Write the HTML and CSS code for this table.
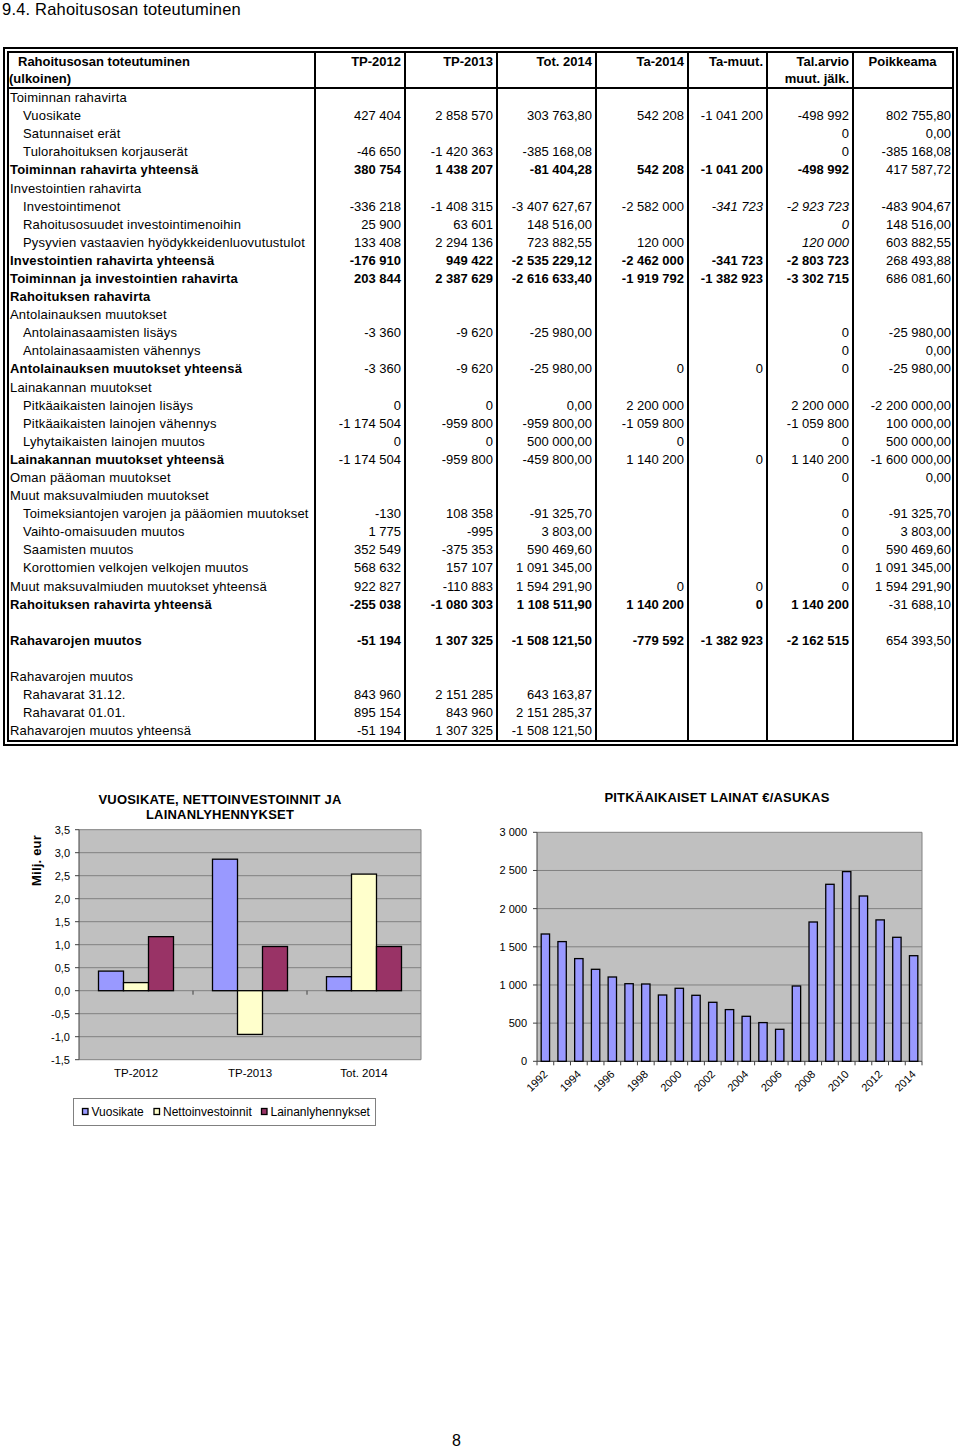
FILE: index.html
```html
<!DOCTYPE html>
<html lang="fi">
<head>
<meta charset="utf-8">
<title>9.4. Rahoitusosan toteutuminen</title>
<link rel="stylesheet" href="styles.css">
</head>
<body>
<h1 class="page-title">9.4. Rahoitusosan toteutuminen</h1>

<div class="report-frame">
<table class="report">
<colgroup>
<col class="c-label"><col class="c-tp12"><col class="c-tp13"><col class="c-tot"><col class="c-ta"><col class="c-muut"><col class="c-arvio"><col class="c-poik">
</colgroup>
<thead>
<tr>
<th class="lbl"><span class="hd-indent">Rahoitusosan toteutuminen</span><br>(ulkoinen)</th>
<th>TP-2012</th><th>TP-2013</th><th>Tot. 2014</th><th>Ta-2014</th><th>Ta-muut.</th><th>Tal.arvio<br>muut. jälk.</th><th class="ctr">Poikkeama</th>
</tr>
</thead>
<tbody>
<tr><td class="lbl">Toiminnan rahavirta</td><td></td><td></td><td></td><td></td><td></td><td></td><td></td></tr>
<tr class="ind"><td class="lbl">Vuosikate</td><td>427 404</td><td>2 858 570</td><td>303 763,80</td><td>542 208</td><td>-1 041 200</td><td>-498 992</td><td>802 755,80</td></tr>
<tr class="ind"><td class="lbl">Satunnaiset erät</td><td></td><td></td><td></td><td></td><td></td><td>0</td><td>0,00</td></tr>
<tr class="ind"><td class="lbl">Tulorahoituksen korjauserät</td><td>-46 650</td><td>-1 420 363</td><td>-385 168,08</td><td></td><td></td><td>0</td><td>-385 168,08</td></tr>
<tr class="b"><td class="lbl">Toiminnan rahavirta yhteensä</td><td>380 754</td><td>1 438 207</td><td>-81 404,28</td><td>542 208</td><td>-1 041 200</td><td>-498 992</td><td class="n">417 587,72</td></tr>
<tr><td class="lbl">Investointien rahavirta</td><td></td><td></td><td></td><td></td><td></td><td></td><td></td></tr>
<tr class="ind"><td class="lbl">Investointimenot</td><td>-336 218</td><td>-1 408 315</td><td>-3 407 627,67</td><td>-2 582 000</td><td class="i">-341 723</td><td class="i">-2 923 723</td><td>-483 904,67</td></tr>
<tr class="ind"><td class="lbl">Rahoitusosuudet investointimenoihin</td><td>25 900</td><td>63 601</td><td>148 516,00</td><td></td><td></td><td class="i">0</td><td>148 516,00</td></tr>
<tr class="ind"><td class="lbl">Pysyvien vastaavien hyödykkeidenluovutustulot</td><td>133 408</td><td>2 294 136</td><td>723 882,55</td><td>120 000</td><td></td><td class="i">120 000</td><td>603 882,55</td></tr>
<tr class="b"><td class="lbl">Investointien rahavirta yhteensä</td><td>-176 910</td><td>949 422</td><td>-2 535 229,12</td><td>-2 462 000</td><td>-341 723</td><td>-2 803 723</td><td class="n">268 493,88</td></tr>
<tr class="b"><td class="lbl">Toiminnan ja investointien rahavirta</td><td>203 844</td><td>2 387 629</td><td>-2 616 633,40</td><td>-1 919 792</td><td>-1 382 923</td><td>-3 302 715</td><td class="n">686 081,60</td></tr>
<tr class="b"><td class="lbl">Rahoituksen rahavirta</td><td></td><td></td><td></td><td></td><td></td><td></td><td></td></tr>
<tr><td class="lbl">Antolainauksen muutokset</td><td></td><td></td><td></td><td></td><td></td><td></td><td></td></tr>
<tr class="ind"><td class="lbl">Antolainasaamisten lisäys</td><td>-3 360</td><td>-9 620</td><td>-25 980,00</td><td></td><td></td><td>0</td><td>-25 980,00</td></tr>
<tr class="ind"><td class="lbl">Antolainasaamisten vähennys</td><td></td><td></td><td></td><td></td><td></td><td>0</td><td>0,00</td></tr>
<tr><td class="lbl bl">Antolainauksen muutokset yhteensä</td><td>-3 360</td><td>-9 620</td><td>-25 980,00</td><td>0</td><td>0</td><td>0</td><td>-25 980,00</td></tr>
<tr><td class="lbl">Lainakannan muutokset</td><td></td><td></td><td></td><td></td><td></td><td></td><td></td></tr>
<tr class="ind"><td class="lbl">Pitkäaikaisten lainojen lisäys</td><td>0</td><td>0</td><td>0,00</td><td>2 200 000</td><td></td><td>2 200 000</td><td>-2 200 000,00</td></tr>
<tr class="ind"><td class="lbl">Pitkäaikaisten lainojen vähennys</td><td>-1 174 504</td><td>-959 800</td><td>-959 800,00</td><td>-1 059 800</td><td></td><td>-1 059 800</td><td>100 000,00</td></tr>
<tr class="ind"><td class="lbl">Lyhytaikaisten lainojen muutos</td><td>0</td><td>0</td><td>500 000,00</td><td>0</td><td></td><td>0</td><td>500 000,00</td></tr>
<tr><td class="lbl bl">Lainakannan muutokset yhteensä</td><td>-1 174 504</td><td>-959 800</td><td>-459 800,00</td><td>1 140 200</td><td>0</td><td>1 140 200</td><td>-1 600 000,00</td></tr>
<tr><td class="lbl">Oman pääoman muutokset</td><td></td><td></td><td></td><td></td><td></td><td>0</td><td>0,00</td></tr>
<tr><td class="lbl">Muut maksuvalmiuden muutokset</td><td></td><td></td><td></td><td></td><td></td><td></td><td></td></tr>
<tr class="ind"><td class="lbl">Toimeksiantojen varojen ja pääomien muutokset</td><td>-130</td><td>108 358</td><td>-91 325,70</td><td></td><td></td><td>0</td><td>-91 325,70</td></tr>
<tr class="ind"><td class="lbl">Vaihto-omaisuuden muutos</td><td>1 775</td><td>-995</td><td>3 803,00</td><td></td><td></td><td>0</td><td>3 803,00</td></tr>
<tr class="ind"><td class="lbl">Saamisten muutos</td><td>352 549</td><td>-375 353</td><td>590 469,60</td><td></td><td></td><td>0</td><td>590 469,60</td></tr>
<tr class="ind"><td class="lbl">Korottomien velkojen velkojen muutos</td><td>568 632</td><td>157 107</td><td>1 091 345,00</td><td></td><td></td><td>0</td><td>1 091 345,00</td></tr>
<tr><td class="lbl">Muut maksuvalmiuden muutokset yhteensä</td><td>922 827</td><td>-110 883</td><td>1 594 291,90</td><td>0</td><td>0</td><td>0</td><td>1 594 291,90</td></tr>
<tr class="b"><td class="lbl">Rahoituksen rahavirta yhteensä</td><td>-255 038</td><td>-1 080 303</td><td>1 108 511,90</td><td>1 140 200</td><td>0</td><td>1 140 200</td><td class="n">-31 688,10</td></tr>
<tr><td class="lbl"></td><td></td><td></td><td></td><td></td><td></td><td></td><td></td></tr>
<tr class="b"><td class="lbl">Rahavarojen muutos</td><td>-51 194</td><td>1 307 325</td><td>-1 508 121,50</td><td>-779 592</td><td>-1 382 923</td><td>-2 162 515</td><td class="n">654 393,50</td></tr>
<tr><td class="lbl"></td><td></td><td></td><td></td><td></td><td></td><td></td><td></td></tr>
<tr><td class="lbl">Rahavarojen muutos</td><td></td><td></td><td></td><td></td><td></td><td></td><td></td></tr>
<tr class="ind"><td class="lbl">Rahavarat 31.12.</td><td>843 960</td><td>2 151 285</td><td>643 163,87</td><td></td><td></td><td></td><td></td></tr>
<tr class="ind"><td class="lbl">Rahavarat 01.01.</td><td>895 154</td><td>843 960</td><td>2 151 285,37</td><td></td><td></td><td></td><td></td></tr>
<tr><td class="lbl">Rahavarojen muutos yhteensä</td><td>-51 194</td><td>1 307 325</td><td>-1 508 121,50</td><td></td><td></td><td></td><td></td></tr>
</tbody>
</table>
</div>

<div class="charts">
<svg class="chart chart-left" width="470" height="370" viewBox="0 0 470 370">
  <text class="ctitle" x="220" y="35.5" text-anchor="middle">VUOSIKATE, NETTOINVESTOINNIT JA</text>
  <text class="ctitle" x="220" y="50.5" text-anchor="middle">LAINANLYHENNYKSET</text>
  <text class="ctitle" transform="translate(41 92.5) rotate(-90)" text-anchor="middle">Milj. eur</text>
  <rect class="plot" x="79" y="61.7" width="342" height="230"/>
  <g class="grid">
    <line x1="79" x2="421" y1="61.7" y2="61.7"/><line x1="79" x2="421" y1="84.7" y2="84.7"/>
    <line x1="79" x2="421" y1="107.7" y2="107.7"/><line x1="79" x2="421" y1="130.7" y2="130.7"/>
    <line x1="79" x2="421" y1="153.7" y2="153.7"/><line x1="79" x2="421" y1="176.7" y2="176.7"/>
    <line x1="79" x2="421" y1="199.7" y2="199.7"/><line x1="79" x2="421" y1="222.7" y2="222.7"/>
    <line x1="79" x2="421" y1="245.7" y2="245.7"/><line x1="79" x2="421" y1="268.7" y2="268.7"/>
    <line x1="79" x2="421" y1="291.7" y2="291.7"/>
    <line x1="421" x2="421" y1="61.7" y2="291.7"/>
  </g>
  <g class="axis">
    <line x1="79" x2="79" y1="61.7" y2="291.7"/>
    <line x1="75" x2="79" y1="61.7" y2="61.7"/><line x1="75" x2="79" y1="84.7" y2="84.7"/>
    <line x1="75" x2="79" y1="107.7" y2="107.7"/><line x1="75" x2="79" y1="130.7" y2="130.7"/>
    <line x1="75" x2="79" y1="153.7" y2="153.7"/><line x1="75" x2="79" y1="176.7" y2="176.7"/>
    <line x1="75" x2="79" y1="199.7" y2="199.7"/><line x1="75" x2="79" y1="222.7" y2="222.7"/>
    <line x1="75" x2="79" y1="245.7" y2="245.7"/><line x1="75" x2="79" y1="268.7" y2="268.7"/>
    <line x1="75" x2="79" y1="291.7" y2="291.7"/>
    <line x1="193" x2="193" y1="222.7" y2="226.7"/><line x1="307" x2="307" y1="222.7" y2="226.7"/>
  </g>
  <g class="ylab" text-anchor="end">
    <text x="70" y="65.7">3,5</text><text x="70" y="88.7">3,0</text><text x="70" y="111.7">2,5</text>
    <text x="70" y="134.7">2,0</text><text x="70" y="157.7">1,5</text><text x="70" y="180.7">1,0</text>
    <text x="70" y="203.7">0,5</text><text x="70" y="226.7">0,0</text><text x="70" y="249.7">-0,5</text>
    <text x="70" y="272.7">-1,0</text><text x="70" y="295.7">-1,5</text>
  </g>
  <g class="bars">
    <rect class="s-v" x="98.5" y="203.1" width="25" height="19.6"/>
    <rect class="s-n" x="123.5" y="214.6" width="25" height="8.1"/>
    <rect class="s-l" x="148.5" y="168.65" width="25" height="54.05"/>
    <rect class="s-v" x="212.5" y="91.2" width="25" height="131.5"/>
    <rect class="s-n" x="237.5" y="222.7" width="25" height="43.7"/>
    <rect class="s-l" x="262.5" y="178.5" width="25" height="44.2"/>
    <rect class="s-v" x="326.5" y="208.7" width="25" height="14"/>
    <rect class="s-n" x="351.5" y="106.1" width="25" height="116.6"/>
    <rect class="s-l" x="376.5" y="178.5" width="25" height="44.2"/>
  </g>
  <g class="xlab" text-anchor="middle">
    <text x="136" y="309">TP-2012</text><text x="250" y="309">TP-2013</text><text x="364" y="309">Tot. 2014</text>
  </g>
  <rect class="legend" x="73.5" y="330.5" width="302" height="27"/>
  <g class="legend-items">
    <rect class="s-v" x="82.5" y="340.5" width="5.5" height="6"/><text x="91.5" y="348">Vuosikate</text>
    <rect class="s-n" x="154" y="340.5" width="5.5" height="6"/><text x="163" y="348">Nettoinvestoinnit</text>
    <rect class="s-l" x="261.5" y="340.5" width="5.5" height="6"/><text x="270.5" y="348">Lainanlyhennykset</text>
  </g>
</svg>

<svg class="chart chart-right" width="490" height="370" viewBox="0 0 490 370">
  <text class="ctitle" x="247" y="33.5" text-anchor="middle">PITKÄAIKAISET LAINAT €/ASUKAS</text>
  <rect class="plot" x="67" y="64.3" width="385" height="229"/>
  <g class="grid">
    <line x1="67" x2="452" y1="64.3" y2="64.3"/><line x1="67" x2="452" y1="102.47" y2="102.47"/>
    <line x1="67" x2="452" y1="140.63" y2="140.63"/><line x1="67" x2="452" y1="178.8" y2="178.8"/>
    <line x1="67" x2="452" y1="216.97" y2="216.97"/><line x1="67" x2="452" y1="255.13" y2="255.13"/>
    <line x1="452" x2="452" y1="64.3" y2="293.3"/>
  </g>
  <g class="axis">
    <line x1="67" x2="67" y1="64.3" y2="293.3"/>
    <line x1="67" x2="452" y1="293.3" y2="293.3"/>
    <line x1="63" x2="67" y1="64.3" y2="64.3"/><line x1="63" x2="67" y1="102.47" y2="102.47"/>
    <line x1="63" x2="67" y1="140.63" y2="140.63"/><line x1="63" x2="67" y1="178.8" y2="178.8"/>
    <line x1="63" x2="67" y1="216.97" y2="216.97"/><line x1="63" x2="67" y1="255.13" y2="255.13"/>
    <line x1="63" x2="67" y1="293.3" y2="293.3"/>
    <line x1="67" x2="67" y1="293.3" y2="297.3"/><line x1="83.74" x2="83.74" y1="293.3" y2="297.3"/>
    <line x1="100.48" x2="100.48" y1="293.3" y2="297.3"/><line x1="117.22" x2="117.22" y1="293.3" y2="297.3"/>
    <line x1="133.96" x2="133.96" y1="293.3" y2="297.3"/><line x1="150.7" x2="150.7" y1="293.3" y2="297.3"/>
    <line x1="167.43" x2="167.43" y1="293.3" y2="297.3"/><line x1="184.17" x2="184.17" y1="293.3" y2="297.3"/>
    <line x1="200.91" x2="200.91" y1="293.3" y2="297.3"/><line x1="217.65" x2="217.65" y1="293.3" y2="297.3"/>
    <line x1="234.39" x2="234.39" y1="293.3" y2="297.3"/><line x1="251.13" x2="251.13" y1="293.3" y2="297.3"/>
    <line x1="267.87" x2="267.87" y1="293.3" y2="297.3"/><line x1="284.61" x2="284.61" y1="293.3" y2="297.3"/>
    <line x1="301.35" x2="301.35" y1="293.3" y2="297.3"/><line x1="318.09" x2="318.09" y1="293.3" y2="297.3"/>
    <line x1="334.83" x2="334.83" y1="293.3" y2="297.3"/><line x1="351.57" x2="351.57" y1="293.3" y2="297.3"/>
    <line x1="368.3" x2="368.3" y1="293.3" y2="297.3"/><line x1="385.04" x2="385.04" y1="293.3" y2="297.3"/>
    <line x1="401.78" x2="401.78" y1="293.3" y2="297.3"/><line x1="418.52" x2="418.52" y1="293.3" y2="297.3"/>
    <line x1="435.26" x2="435.26" y1="293.3" y2="297.3"/><line x1="452" x2="452" y1="293.3" y2="297.3"/>
  </g>
  <g class="ylab" text-anchor="end">
    <text x="57" y="68.3">3 000</text><text x="57" y="106.47">2 500</text><text x="57" y="144.63">2 000</text>
    <text x="57" y="182.8">1 500</text><text x="57" y="220.97">1 000</text><text x="57" y="259.13">500</text>
    <text x="57" y="297.3">0</text>
  </g>
  <g class="bars">
    <rect class="s-v" x="71.19" y="166" width="8.37" height="127.3"/>
    <rect class="s-v" x="87.92" y="173.6" width="8.37" height="119.7"/>
    <rect class="s-v" x="104.66" y="190.6" width="8.37" height="102.7"/>
    <rect class="s-v" x="121.4" y="201.3" width="8.37" height="92"/>
    <rect class="s-v" x="138.14" y="209" width="8.37" height="84.3"/>
    <rect class="s-v" x="154.88" y="215.7" width="8.37" height="77.6"/>
    <rect class="s-v" x="171.62" y="216" width="8.37" height="77.3"/>
    <rect class="s-v" x="188.36" y="227" width="8.37" height="66.3"/>
    <rect class="s-v" x="205.1" y="220.3" width="8.37" height="73"/>
    <rect class="s-v" x="221.84" y="227.3" width="8.37" height="66"/>
    <rect class="s-v" x="238.58" y="234.3" width="8.37" height="59"/>
    <rect class="s-v" x="255.32" y="241.6" width="8.37" height="51.7"/>
    <rect class="s-v" x="272.06" y="248.3" width="8.37" height="45"/>
    <rect class="s-v" x="288.8" y="254.6" width="8.37" height="38.7"/>
    <rect class="s-v" x="305.53" y="261.3" width="8.37" height="32"/>
    <rect class="s-v" x="322.27" y="218" width="8.37" height="75.3"/>
    <rect class="s-v" x="339.01" y="154" width="8.37" height="139.3"/>
    <rect class="s-v" x="355.75" y="116.3" width="8.37" height="177"/>
    <rect class="s-v" x="372.49" y="103.6" width="8.37" height="189.7"/>
    <rect class="s-v" x="389.23" y="128" width="8.37" height="165.3"/>
    <rect class="s-v" x="405.97" y="151.9" width="8.37" height="141.4"/>
    <rect class="s-v" x="422.71" y="169.3" width="8.37" height="124"/>
    <rect class="s-v" x="439.45" y="187.7" width="8.37" height="105.6"/>
  </g>
  <g class="ylab" text-anchor="end">
    <text transform="translate(78.4 307) rotate(-45)">1992</text>
    <text transform="translate(111.8 307) rotate(-45)">1994</text>
    <text transform="translate(145.3 307) rotate(-45)">1996</text>
    <text transform="translate(178.8 307) rotate(-45)">1998</text>
    <text transform="translate(212.3 307) rotate(-45)">2000</text>
    <text transform="translate(245.8 307) rotate(-45)">2002</text>
    <text transform="translate(279.2 307) rotate(-45)">2004</text>
    <text transform="translate(312.7 307) rotate(-45)">2006</text>
    <text transform="translate(346.2 307) rotate(-45)">2008</text>
    <text transform="translate(379.7 307) rotate(-45)">2010</text>
    <text transform="translate(413.2 307) rotate(-45)">2012</text>
    <text transform="translate(446.6 307) rotate(-45)">2014</text>
  </g>
</svg>
</div>

<div class="page-number">8</div>
</body>
</html>
```

FILE: styles.css
```css
html, body {
  margin: 0;
  padding: 0;
  background: #fff;
  color: #000;
  font-family: "Liberation Sans", Arial, sans-serif;
}

.page-title {
  margin: 0;
  padding: 0 0 0 2px;
  height: 47px;
  font-size: 16.5px;
  letter-spacing: 0.2px;
  line-height: 18px;
  font-weight: normal;
}

.report-frame {
  margin-left: 3px;
  width: 943px;
  border: 6px double #000;
}

.report {
  width: 943px;
  table-layout: fixed;
  border-collapse: separate;
  border-spacing: 0;
  font-size: 13px;
}

.c-label { width: 307px; }
.c-tp12 { width: 90px; }
.c-tp13 { width: 92px; }
.c-tot { width: 99px; }
.c-ta { width: 92px; }
.c-muut { width: 79px; }
.c-arvio { width: 86px; }
.c-poik { width: 98px; }

.report th,
.report td {
  border-right: 2px solid #000;
  padding: 0 3px 0 0;
  text-align: right;
  white-space: nowrap;
  overflow: hidden;
  vertical-align: middle;
}

.report th:last-child,
.report td:last-child {
  border-right: none;
  padding-right: 1px;
}

.report th {
  font-weight: bold;
  line-height: 17px;
  height: 34px;
  vertical-align: top;
  border-bottom: 2px solid #000;
}

.report th.ctr { text-align: center; }

.report th.lbl { text-align: left; padding-left: 0; }
.hd-indent { padding-left: 9px; }

.report tbody tr { height: 18.1px; }
.report td { line-height: 16px; height: 18.1px; }

.report td.lbl { text-align: left; padding-left: 1px; letter-spacing: 0.18px; }
.report tr.ind td.lbl { padding-left: 14px; }

.report tr.b td { font-weight: bold; }
.report tr.b td.n { font-weight: normal; }
.report td.bl { font-weight: bold; }
.report td.i { font-style: italic; }

.charts {
  display: flex;
  margin-top: 22px;
}

.chart { display: block; font-family: "Liberation Sans", Arial, sans-serif; }

.ctitle { font-size: 13px; font-weight: bold; letter-spacing: 0.2px; fill: #000; }
.plot { fill: #c0c0c0; }
.grid line { stroke: #808080; stroke-width: 1; }
.axis line { stroke: #404040; stroke-width: 1; }
.ylab text { font-size: 11px; fill: #000; }
.xlab text { font-size: 11.5px; fill: #000; }
.bars rect, .legend-items rect { stroke: #000; stroke-width: 1.3; }
.s-v { fill: #9999ff; }
.s-n { fill: #ffffcc; }
.s-l { fill: #993366; }
.legend { fill: #fff; stroke: #808080; stroke-width: 1; }
.legend-items text { font-size: 12px; fill: #000; }

.page-number {
  margin-top: 294px;
  padding-left: 452px;
  font-size: 16px;
  line-height: 18px;
}
```
